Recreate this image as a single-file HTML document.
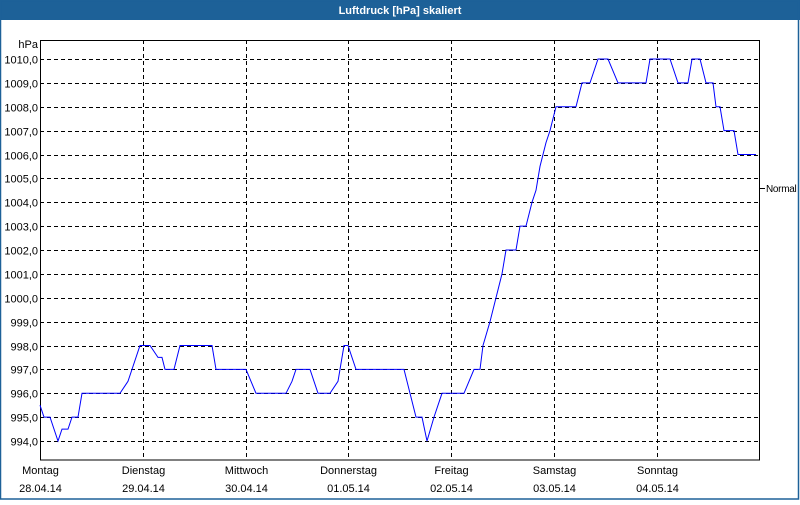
<!DOCTYPE html>
<html><head><meta charset="utf-8"><style>
body{margin:0;width:800px;height:500px;overflow:hidden;background:#fff;font-family:"Liberation Sans",sans-serif}
</style></head><body>
<svg id="s" width="800" height="500" xmlns="http://www.w3.org/2000/svg" font-family="Liberation Sans, sans-serif" font-size="11">
<rect x="0" y="0" width="800" height="500" fill="#fff"/>
<rect x="0" y="0" width="800" height="20" fill="#1d6198"/>
<rect x="0.5" y="0.5" width="798" height="498.5" fill="none" stroke="#1d6198" stroke-width="1.5"/>
<text x="400" y="14" fill="#fff" font-weight="bold" text-anchor="middle">Luftdruck [hPa] skaliert</text>
<g id="g" stroke="#000" stroke-dasharray="4,3" stroke-width="1"></g>
<rect x="40.5" y="40.5" width="719" height="419.5" fill="none" stroke="#000"/>
<line x1="760" y1="188.5" x2="765" y2="188.5" stroke="#000"/>
<text x="766" y="192" fill="#000" font-size="10" letter-spacing="-0.3">Normal</text>
<text x="38" y="48" text-anchor="end">hPa</text>
<g id="t" fill="#000"></g>
<polyline id="p" fill="none" stroke="#0000ff" stroke-width="1"/>
</svg>
<script>
var Y=v=>59+(1010-v)*23.875, g=document.getElementById('g'), t=document.getElementById('t'), ns='http://www.w3.org/2000/svg';
function el(p,n,a,txt){var e=document.createElementNS(ns,n);for(var k in a)e.setAttribute(k,a[k]);if(txt)e.textContent=txt;p.appendChild(e);}
for(var v=994;v<=1010;v++){var y=Math.round(Y(v))+0.5;el(g,'line',{x1:40,x2:760,y1:y,y2:y});el(t,'text',{x:38,y:y+4,'text-anchor':'end'},(v+',0'));}
var days=[['Montag','28.04.14'],['Dienstag','29.04.14'],['Mittwoch','30.04.14'],['Donnerstag','01.05.14'],['Freitag','02.05.14'],['Samstag','03.05.14'],['Sonntag','04.05.14']];
days.forEach(function(d,i){var x=Math.round(40+i*102.8)+0.5;if(i>0)el(g,'line',{x1:x,x2:x,y1:40,y2:460});el(t,'text',{x:x,y:474,'text-anchor':'middle'},d[0]);el(t,'text',{x:x,y:492,'text-anchor':'middle'},d[1]);});
var d=[40,995.5,44,995,50,995,58,994,62,994.5,68,994.5,72,995,78,995,82,996,120,996,128,996.5,140,998,150,998,158,997.5,162,997.5,165,997,174,997,180,998,212,998,216,997,246,997,256,996,286,996,292,996.5,296,997,310,997,318,996,330,996,338,996.5,344,998,348,998,356,997,404,997,410,996,416,995,422,995,427,994,434,995,442,996,464,996,474,997,480,997,483,998,490,999,496,1000,502,1001,506,1002,516,1002,520,1003,526,1003,532,1004,536,1004.5,540,1005.5,546,1006.5,550,1007,556,1008,576,1008,582,1009,590,1009,598,1010,608,1010,618,1009,646,1009,650,1010,670,1010,678,1009,688,1009,692,1010,700,1010,706,1009,713,1009,716,1008,720,1008,724,1007,734,1007,738,1006,756,1006];
var pts=[];for(var i=0;i<d.length;i+=2)pts.push(d[i]+','+Y(d[i+1]).toFixed(1));
document.getElementById('p').setAttribute('points',pts.join(' '));
</script>
</body></html>
